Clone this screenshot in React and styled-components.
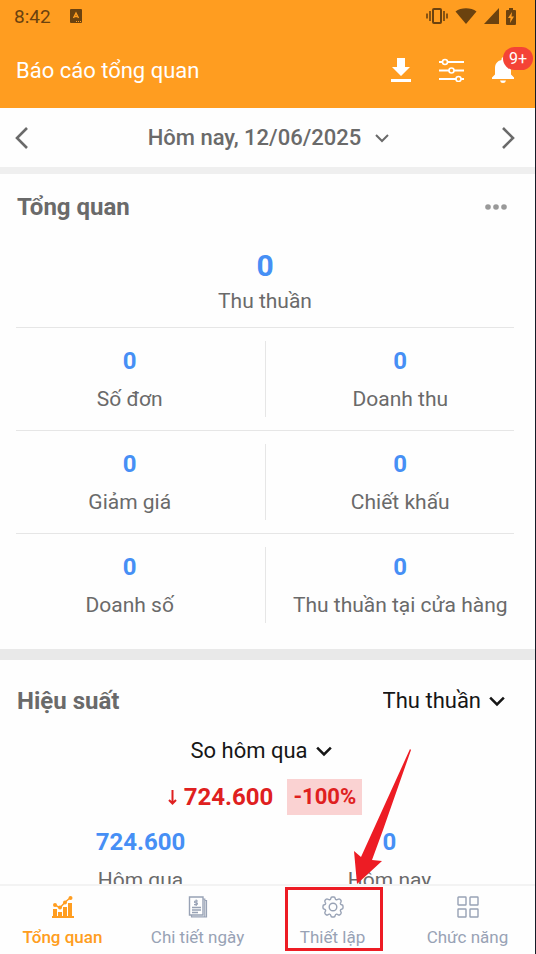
import styled, { createGlobalStyle } from "styled-components";

const GlobalStyle = createGlobalStyle`
  * {
    box-sizing: border-box;
  }

  body {
    margin: 0;
    background: #fefefe;
    font-family: Roboto, "Noto Sans", sans-serif;
    color: #6a6a6a;
  }

  h1, h2, p, dl, dd {
    margin: 0;
  }

  button, select {
    font: inherit;
    color: inherit;
    background: none;
    border: 0;
    padding: 0;
    cursor: pointer;
  }

  svg {
    display: block;
  }
`;

const Screen = styled.div`
  display: flex;
  flex-direction: column;
  height: 100vh;
  overflow: hidden;

  border-right: 1px solid #161c28;
`;

const Header = styled.header`
  flex: none;
  background: #ff9d20;
`;

const StatusBar = styled.div`
  display: flex;
  align-items: center;
  height: 32px;
  padding: 0 19px 0 14px;

  font-size: 19px;
  color: #6b420f;
`;

const Clock = styled.span`
  margin-right: 19px;
`;

const StatusIcons = styled.div`
  display: flex;
  align-items: center;
  gap: 7px;
  margin-left: auto;
`;

const AppBar = styled.div`
  display: flex;
  align-items: center;
  justify-content: space-between;
  height: 76px;
  padding: 0 18px 0 16px;

  color: #fff;
`;

const AppTitle = styled.h1`
  font-size: 22px;
  font-weight: 400;
`;

const Actions = styled.div`
  display: flex;
  align-items: center;
  gap: 23px;
`;

const IconButton = styled.button`
  display: flex;
  align-items: center;
  justify-content: center;
  min-width: 28px;
  height: 28px;

  position: relative;
`;

const Badge = styled.span`
  position: absolute;
  top: -9px;
  left: 14px;

  width: 30px;
  border-radius: 12px;
  background: #f44336;

  font-size: 16px;
  line-height: 23px;
  text-align: center;
`;

const Content = styled.main`
  flex: 1;
  min-height: 0;
  overflow-y: auto;
  scrollbar-width: none;
`;

const DateBar = styled.div`
  display: flex;
  align-items: center;
  justify-content: space-between;
  height: 59px;
  padding: 0 13px 0 8px;
`;

const DateButton = styled.button`
  display: flex;
  align-items: center;
  gap: 14px;
  padding-left: 7px;

  font-size: 22px;
  font-weight: 500;
`;

const Separator = styled.div`
  height: ${(props) => props.$size}px;
  background: ${(props) => props.$color};
`;

const Section = styled.section`
  padding: ${(props) => props.$padding};
`;

const SectionHeader = styled.div`
  display: flex;
  align-items: center;
  justify-content: space-between;
  height: 66px;
  padding: 0 5px 0 1px;
`;

const SectionTitle = styled.h2`
  font-size: 24px;
  font-weight: 700;
`;

const Metric = styled.dl`
  display: flex;
  flex: 1;
  flex-direction: column-reverse;

  text-align: center;
`;

const MetricValue = styled.dd`
  font-size: ${(props) => (props.$large ? 30 : 24)}px;
  font-weight: 700;
  line-height: 40px;
  color: #468ff5;
`;

const MetricName = styled.dt`
  font-size: 21px;
  line-height: ${(props) => (props.$large ? 30 : 36)}px;
`;

const MainMetric = styled.div`
  display: flex;
  padding: 6px 0 11px;
`;

const MetricRow = styled.div`
  padding: 13px 0;
  border-top: 1px solid #e6e6e6;
`;

/* columns reach the screen edges, past the rules between the rows */
const MetricPair = styled.div`
  display: flex;
  margin: 0 -21px;

  > * + * {
    border-left: 1px solid #e6e6e6;
  }
`;

const SelectBox = styled.label`
  display: flex;
  align-items: center;
  gap: 8px;
  padding-right: 4px;

  font-size: 22px;
  line-height: 34px;
  color: #161616;
`;

const Select = styled.select`
  appearance: none;
  field-sizing: content;
  outline: none;
`;

const Center = styled.div`
  display: flex;
  justify-content: center;
  padding-right: 4px;
`;

const Change = styled.div`
  display: flex;
  align-items: center;
  justify-content: center;
  gap: 14px;
  margin: 11px 0 7px;

  font-size: 24px;
  font-weight: 700;
  line-height: 36px;
  color: #df2020;
`;

const Amount = styled.span`
  display: flex;
  align-items: center;
  gap: 7px;
`;

const Percent = styled.span`
  padding: 0 6px;
  background: #fad2d2;
  font-size: 22px;
`;

const Compare = styled.div`
  display: flex;
`;

const TabBar = styled.nav`
  display: flex;
  flex: none;
  height: 70px;
  margin-left: -5px;

  position: relative;

  border-top: 2px solid #f3f3f3;
  background: #fefefe;
`;

const Tab = styled.a`
  display: flex;
  flex: 1;
  flex-direction: column;
  align-items: center;
  gap: 6px;
  padding-top: 10px;

  position: relative;

  font-size: 17px;
  font-weight: ${(props) => (props.$active ? 500 : 400)};
  line-height: 26px;
  text-decoration: none;
  color: ${(props) => (props.$active ? "#ff9d20" : "#98a2b5")};
`;

const Highlight = styled.span`
  position: absolute;
  inset: 1px 17px 3px 20px;

  border: 3px solid #ed1c24;
  pointer-events: none;
`;

const Pointer = styled.svg`
  position: absolute;
  left: 66px;
  bottom: calc(100% + 6px);
`;

const Chevron = ({ size = 14, stroke = 2 }) => (
  <svg width={size} height={size} viewBox="0 0 14 14" fill="none" stroke="currentColor" strokeWidth={stroke}>
    <path d="M1 4l6 6 6-6" />
  </svg>
);

const Arrow = ({ d }) => (
  <svg width="30" height="30" viewBox="0 0 30 30" fill="none" stroke="currentColor" strokeWidth="2.600">
    <path d={d} />
  </svg>
);

const KeyboardIcon = () => (
  <svg width="12" height="14" viewBox="0 0 12 14">
    <rect width="12" height="14" rx="1" fill="currentColor" />
    <path d="M3.500 9L6 4l2.500 5M4.500 7.500h3" fill="none" stroke="#ff9d20" strokeWidth="1.400" />
    <path d="M6 12.500h1m1 0h1m1 0h1" stroke="#ff9d20" />
  </svg>
);

const VibrateIcon = () => (
  <svg width="22" height="18" viewBox="0 0 22 18" fill="none" stroke="currentColor" strokeWidth="2">
    <rect x="7" y="2" width="8" height="14" rx="1" />
    <path d="M4 4v10M18 4v10M1 6.500v5M21 6.500v5" strokeWidth="1.600" />
  </svg>
);

const WifiIcon = () => (
  <svg width="22" height="16" viewBox="0 0 22 16" fill="currentColor">
    <path d="M11 16L.5 3.500C6-.8 16-.8 21.500 3.500z" />
  </svg>
);

const SignalIcon = () => (
  <svg width="15" height="16" viewBox="0 0 15 16" fill="currentColor">
    <path d="M15 0v16H0z" />
  </svg>
);

const BatteryIcon = () => (
  <svg width="10" height="17" viewBox="0 0 10 17">
    <path d="M3 0h4v2h2q1 0 1 1v13q0 1-1 1H1q-1 0-1-1V3q0-1 1-1h2z" fill="currentColor" />
    <path d="M6 4L2 10h2.500L4 15l4-6.500H5.500z" fill="#ff9d20" />
  </svg>
);

const DownloadIcon = () => (
  <svg width="20" height="24" viewBox="0 0 20 24" fill="currentColor">
    <path d="M6 0h8v9h5L10 18 1 9h5zM0 21h20v3H0z" />
  </svg>
);

const SlidersIcon = () => (
  <svg width="26" height="24" viewBox="0 0 26 24" fill="none" stroke="currentColor" strokeWidth="2">
    <path d="M0 4h4M8 4h17M0 12.500h10M15 12.500h10M0 21h17M22 21h3" />
    <circle cx="6" cy="4" r="2.500" strokeWidth="1.600" />
    <circle cx="12.500" cy="12.500" r="2.500" strokeWidth="1.600" />
    <circle cx="19.500" cy="21" r="2.500" strokeWidth="1.600" />
  </svg>
);

const BellIcon = () => (
  <svg width="22" height="26" viewBox="0 0 22 26" fill="currentColor">
    <path d="M9.500 2q0-1.800 1.500-1.800T12.500 2v1c4.500.9 6.500 4.300 6.500 8v6.500l3 3V22H0v-1.500l3-3V11c0-3.700 2-7.100 6.500-8zM8 23.500h6q-.5 2.500-3 2.500t-3-2.500z" />
  </svg>
);

const MoreIcon = () => (
  <svg width="24" height="6" viewBox="0 0 24 6" fill="#999">
    <circle cx="5" cy="3" r="2.800" />
    <circle cx="13" cy="3" r="2.800" />
    <circle cx="21" cy="3" r="2.800" />
  </svg>
);

const DownIcon = () => (
  <svg width="9" height="16" viewBox="0 0 9 16" fill="none" stroke="currentColor" strokeWidth="2">
    <path d="M4.500 1v13M1 11l3.500 3.500L8 11" />
  </svg>
);

const ChartIcon = () => (
  <svg width="22" height="22" viewBox="0 0 22 22" fill="currentColor">
    <path d="M1 13h4v7H1zM6 16h4v4H6zM11 11h4v9h-4zM16 7h4v13h-4zM0 20h22v2H0z" />
    <path d="M3 9l5 2.800 5-5.500 5-4.300" fill="none" stroke="currentColor" strokeWidth="1.500" />
    <circle cx="3" cy="9" r="2" />
    <circle cx="8" cy="11.500" r="2" />
    <circle cx="13" cy="6.500" r="2" />
    <circle cx="18.500" cy="2" r="2" />
  </svg>
);

const BillIcon = () => (
  <svg width="20" height="22" viewBox="0 0 20 22" fill="none" stroke="currentColor" strokeWidth="1.400">
    <path d="M1.500 1h13.500v18H1.500z" />
    <path d="M15 3h1.800v17.800H3.500V19M17 4.500h1.500v16.500h-2" strokeWidth="1.200" />
    <path d="M4 11.500h9M4 14h9M4 16.500h6" />
    <path d="M10 5H7.500q-1 0-1 .9t1 .9h1q1 0 1 .9t-1 .9H6M8.200 3.500v6.500" strokeWidth="1.100" />
  </svg>
);

const GearIcon = () => (
  <svg width="22" height="22" viewBox="0 0 22 22" fill="none" stroke="currentColor" strokeWidth="1.400" strokeLinejoin="round">
    <circle cx="11" cy="11" r="3.800" />
    <path d="M8.800 2.600Q9 1 10 1h2q1 0 1.200 1.600.2 1 1.200 1.200.7.100 1.500-.5 1.200-.8 2 0l1 1q.7.800-.1 2-.6.800-.4 1.500.3.900 1.100 1 1.500.2 1.500 1.200v2q0 1-1.500 1.200-.8.100-1.100 1-.2.700.4 1.500.8 1.200.1 2l-1 1q-.8.700-2-.1-.8-.6-1.500-.4-1 .3-1.200 1.200Q13 21 12 21h-2q-1 0-1.200-1.600-.2-.9-1.200-1.200-.7-.2-1.500.4-1.200.8-2 .1l-1-1q-.7-.8.1-2 .6-.8.4-1.500-.3-.9-1.100-1Q1 13 1 12v-2q0-1 1.500-1.200.8-.1 1.100-1 .2-.7-.4-1.500-.8-1.200-.1-2l1-1q.8-.8 2 0 .8.600 1.500.5 1-.2 1.200-1.200z" />
  </svg>
);

const GridIcon = () => (
  <svg width="22" height="22" viewBox="0 0 22 22" fill="none" stroke="currentColor" strokeWidth="1.400">
    <rect x="1" y="1" width="8" height="8" rx=".5" />
    <rect x="13" y="1" width="8" height="8" rx=".5" />
    <rect x="1" y="13" width="8" height="8" rx=".5" />
    <rect x="13" y="13" width="8" height="8" rx=".5" />
  </svg>
);

const metricRows = [
  [
    { name: "Số đơn", value: "0" },
    { name: "Doanh thu", value: "0" },
  ],
  [
    { name: "Giảm giá", value: "0" },
    { name: "Chiết khấu", value: "0" },
  ],
  [
    { name: "Doanh số", value: "0" },
    { name: "Thu thuần tại cửa hàng", value: "0" },
  ],
];

const tabs = [
  { name: "Tổng quan", icon: <ChartIcon />, active: true },
  { name: "Chi tiết ngày", icon: <BillIcon /> },
  { name: "Thiết lập", icon: <GearIcon />, highlighted: true },
  { name: "Chức năng", icon: <GridIcon /> },
];

const Stat = ({ name, value, large }) => (
  <Metric>
    <MetricName $large={large}>{name}</MetricName>
    <MetricValue $large={large}>{value}</MetricValue>
  </Metric>
);

const Dropdown = ({ label, value }) => (
  <SelectBox>
    <Select aria-label={label} defaultValue={value}>
      <option>{value}</option>
    </Select>
    <Chevron size={16} stroke={2.2} />
  </SelectBox>
);

const App = () => {
  return (
    <Screen>
      <GlobalStyle />
      <Header>
        <StatusBar>
          <Clock>8:42</Clock>
          <KeyboardIcon />
          <StatusIcons>
            <VibrateIcon />
            <WifiIcon />
            <SignalIcon />
            <BatteryIcon />
          </StatusIcons>
        </StatusBar>
        <AppBar>
          <AppTitle>Báo cáo tổng quan</AppTitle>
          <Actions>
            <IconButton aria-label="Tải xuống">
              <DownloadIcon />
            </IconButton>
            <IconButton aria-label="Bộ lọc">
              <SlidersIcon />
            </IconButton>
            <IconButton aria-label="Thông báo">
              <BellIcon />
              <Badge>9+</Badge>
            </IconButton>
          </Actions>
        </AppBar>
      </Header>
      <Content>
        <DateBar>
          <IconButton aria-label="Ngày trước">
            <Arrow d="M19 5L9 15l10 10" />
          </IconButton>
          <DateButton>
            Hôm nay, 12/06/2025
            <Chevron />
          </DateButton>
          <IconButton aria-label="Ngày sau">
            <Arrow d="M11 5l10 10-10 10" />
          </IconButton>
        </DateBar>
        <Separator $size={7} $color="#efefef" />
        <Section $padding="0 21px 13px 16px">
          <SectionHeader>
            <SectionTitle>Tổng quan</SectionTitle>
            <IconButton aria-label="Thêm">
              <MoreIcon />
            </IconButton>
          </SectionHeader>
          <MainMetric>
            <Stat name="Thu thuần" value="0" large />
          </MainMetric>
          {metricRows.map((row) => (
            <MetricRow key={row[0].name}>
              <MetricPair>
                {row.map((item) => (
                  <Stat key={item.name} {...item} />
                ))}
              </MetricPair>
            </MetricRow>
          ))}
        </Section>
        <Separator $size={11} $color="#e9e9e9" />
        <Section $padding="8px 21px 13px 16px">
          <SectionHeader>
            <SectionTitle>Hiệu suất</SectionTitle>
            <Dropdown label="Chỉ số" value="Thu thuần" />
          </SectionHeader>
          <Center>
            <Dropdown label="So sánh" value="So hôm qua" />
          </Center>
          <Change>
            <Amount>
              <DownIcon />
              724.600
            </Amount>
            <Percent>-100%</Percent>
          </Change>
          <Compare>
            <Stat name="Hôm qua" value="724.600" />
            <Stat name="Hôm nay" value="0" />
          </Compare>
        </Section>
      </Content>
      <TabBar>
        {tabs.map((tab) => (
          <Tab key={tab.name} href="#" $active={tab.active}>
            {tab.icon}
            {tab.name}
            {tab.highlighted && (
              <Highlight>
                <Pointer width="58" height="135" viewBox="0 0 58 135" fill="#ed1c24">
                  <path d="M56 0l1 1-28 80-11 30 10 1L3 135 0 102l7 6z" />
                </Pointer>
              </Highlight>
            )}
          </Tab>
        ))}
      </TabBar>
    </Screen>
  );
};

export default App;
